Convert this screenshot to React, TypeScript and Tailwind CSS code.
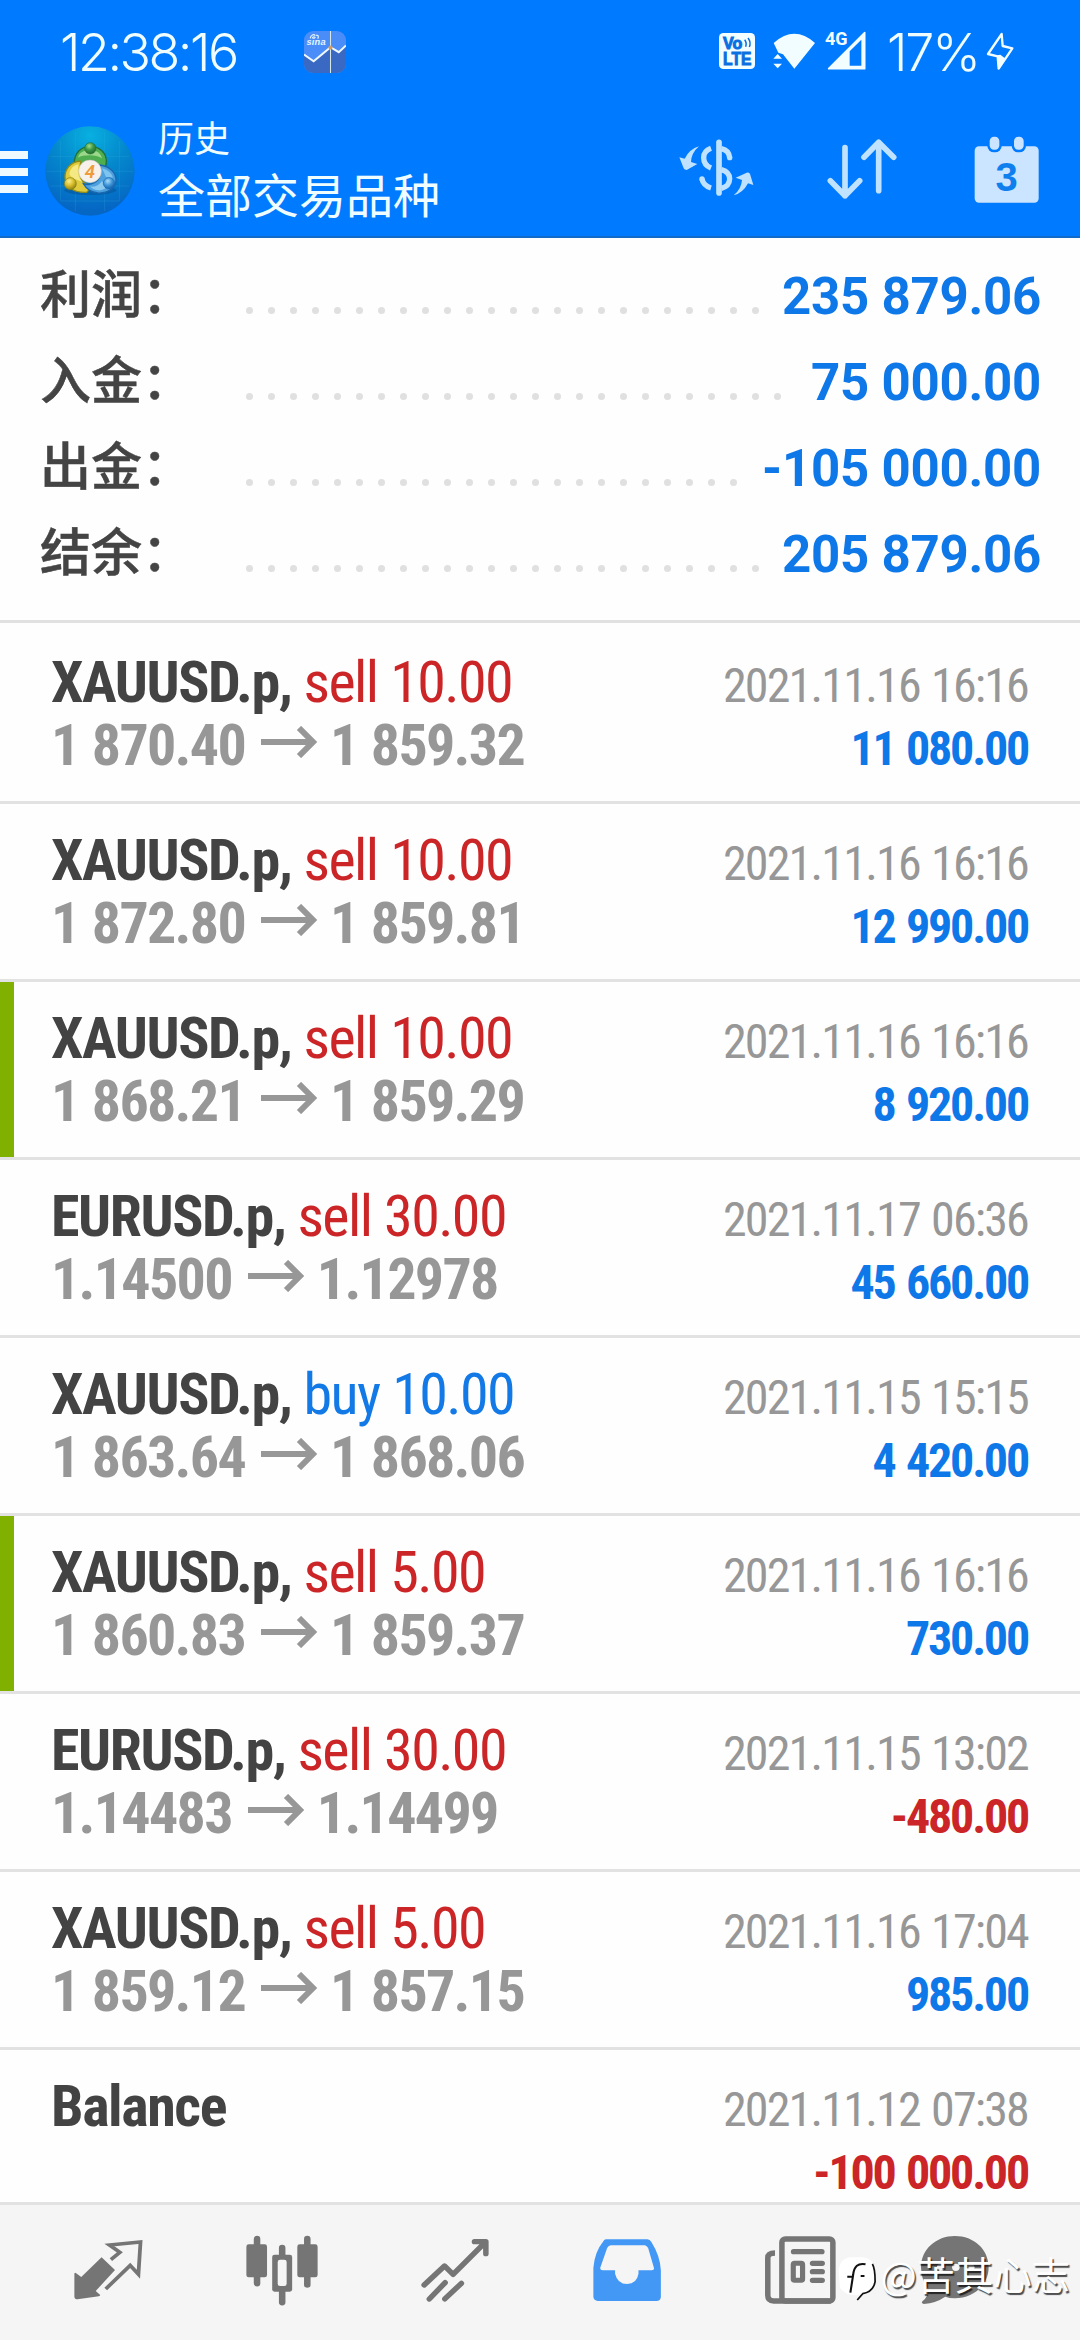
import type { ReactNode } from 'react';

type Deal = {
  symbol: string;
  side?: 'sell' | 'buy';
  volume?: string;
  from?: string;
  to?: string;
  time: string;
  profit: string;
  marked?: boolean;
};

const summary = [
  { label: '利润', value: '235 879.06', dots: 24 },
  { label: '入金', value: '75 000.00', dots: 25 },
  { label: '出金', value: '-105 000.00', dots: 23 },
  { label: '结余', value: '205 879.06', dots: 24 },
];

const deals: Deal[] = [
  { symbol: 'XAUUSD.p', side: 'sell', volume: '10.00', from: '1 870.40', to: '1 859.32', time: '2021.11.16 16:16', profit: '11 080.00' },
  { symbol: 'XAUUSD.p', side: 'sell', volume: '10.00', from: '1 872.80', to: '1 859.81', time: '2021.11.16 16:16', profit: '12 990.00' },
  { symbol: 'XAUUSD.p', side: 'sell', volume: '10.00', from: '1 868.21', to: '1 859.29', time: '2021.11.16 16:16', profit: '8 920.00', marked: true },
  { symbol: 'EURUSD.p', side: 'sell', volume: '30.00', from: '1.14500', to: '1.12978', time: '2021.11.17 06:36', profit: '45 660.00' },
  { symbol: 'XAUUSD.p', side: 'buy', volume: '10.00', from: '1 863.64', to: '1 868.06', time: '2021.11.15 15:15', profit: '4 420.00' },
  { symbol: 'XAUUSD.p', side: 'sell', volume: '5.00', from: '1 860.83', to: '1 859.37', time: '2021.11.16 16:16', profit: '730.00', marked: true },
  { symbol: 'EURUSD.p', side: 'sell', volume: '30.00', from: '1.14483', to: '1.14499', time: '2021.11.15 13:02', profit: '-480.00' },
  { symbol: 'XAUUSD.p', side: 'sell', volume: '5.00', from: '1 859.12', to: '1 857.15', time: '2021.11.16 17:04', profit: '985.00' },
  { symbol: 'Balance', time: '2021.11.12 07:38', profit: '-100 000.00' },
];

function Icon({ box, className, children }: { box: string; className: string; children: ReactNode }) {
  return (
    <svg viewBox={box} preserveAspectRatio="none" className={`block shrink-0 ${className}`} fill="none">
      {children}
    </svg>
  );
}

function StatusBar() {
  return (
    <div className="flex h-[106px] items-start pt-[31px] pl-[60px] text-[#f0fdff]">
      <span className="mt-[1px] w-[244px] font-['Inter',sans-serif] text-[52px] leading-[42px] font-[330] tracking-[-2.5px]">12:38:16</span>
      <Icon box="883 93 122 125" className="h-[42px] w-[42px] rounded-[9px]">
        <rect x="883" y="93" width="122" height="125" fill="#4a8cf8" />
        <path d="M883 163L911 183L960 141L984 156L1005 136V218H883Z" fill="#3a69c4" />
        <path d="M883 163L911 183L960 141L984 156L1005 136" stroke="#eef8ff" strokeWidth="6" />
        <path d="M960 93V218" stroke="#d6e6e0" strokeWidth="3" />
        <circle cx="960" cy="142" r="6" fill="#d59a60" />
        <path d="M901 115C903 105 911 101 916 107M907 115C909 109 914 109 916 114M918 106C925 104 926 110 923 116" stroke="#e3f6ff" strokeWidth="3.5" />
        <text x="890" y="135" fontSize="27" fontStyle="italic" fontWeight="700" fontFamily="Liberation Sans, sans-serif" fill="#e3f6ff" textLength="56">sina</text>
      </Icon>
      <div className="ml-auto flex items-start pr-[66px]">
        <Icon box="234 99 108 108" className="mt-[2px] mr-[18px] h-[36px] w-[36px]">
          <rect x="234" y="99" width="108" height="108" rx="13" fill="#f2fdff" />
          <text x="246" y="148" fontSize="50" fontWeight="700" fontFamily="Liberation Sans, sans-serif" fill="#0a6fe0" stroke="#0a6fe0" strokeWidth="3" textLength="58" lengthAdjust="spacingAndGlyphs">Vo</text>
          <text x="246" y="194" fontSize="54" fontWeight="700" fontFamily="Liberation Sans, sans-serif" fill="#0a6fe0" stroke="#0a6fe0" strokeWidth="3" textLength="85" lengthAdjust="spacingAndGlyphs">LTE</text>
          <path d="M311 119Q318 128 314 140M321 114Q331 127 325 141" stroke="#0a6fe0" strokeWidth="4.5" />
        </Icon>
        <Icon box="395 99 128 108" className="mt-[2px] mr-[10px] h-[36px] w-[42.7px]">
          <path d="M397 129Q459 74 521 129L459 206L425 163L411 158Z" fill="#f2fdff" />
          <path d="M392 180L409 157L427 180ZM392 187L409 209L427 187Z" fill="#007aff" />
          <path d="M396 176L409 162L422 176ZM396 191L409 205L422 191Z" fill="#f2fdff" />
        </Icon>
        <Icon box="553 94 122 117" className="mr-[21px] h-[39px] w-[40.7px] overflow-visible">
          <path d="M564 207L672 99V207Z" fill="#f2fdff" stroke="#f2fdff" strokeWidth="5" strokeLinejoin="round" />
          <path d="M627 155L662 120V198H627Z" fill="#007aff" />
          <text x="553" y="137" fontSize="53" fontWeight="700" fontFamily="Roboto, sans-serif" fill="#f2fdff" textLength="68" lengthAdjust="spacingAndGlyphs">4G</text>
        </Icon>
        <span className="mt-[1px] mr-[10px] w-[89px] font-['Inter',sans-serif] text-[52px] leading-[42px] font-[330] tracking-[-2.2px] whitespace-nowrap">17%</span>
        <Icon box="1036 92 84 120" className="h-[40px] w-[28px]">
          <path d="M1083 101L1042 161L1071 168L1074 205L1115 144L1086 137Z" stroke="#f2fdff" strokeWidth="7" strokeLinejoin="round" />
          <path d="M1070 165L1075 205L1095 175L1079 163Z" fill="#f2fdff" />
        </Icon>
      </div>
    </div>
  );
}

function AppLogo() {
  return (
    <svg viewBox="45 45 270 270" className="block h-[90px] w-[90px] shrink-0" fill="none">
      <defs>
        <radialGradient id="disc" cx="0.5" cy="0.1" r="0.85">
          <stop offset="0" stopColor="#08b0e0" />
          <stop offset="0.5" stopColor="#0487cc" />
          <stop offset="1" stopColor="#0566c4" />
        </radialGradient>
        <radialGradient id="green" cx="0.4" cy="0.3" r="0.7">
          <stop offset="0" stopColor="#a5dc8c" />
          <stop offset="0.5" stopColor="#3f9a45" />
          <stop offset="1" stopColor="#206c30" />
        </radialGradient>
        <radialGradient id="gold" cx="0.4" cy="0.3" r="0.7">
          <stop offset="0" stopColor="#faf08a" />
          <stop offset="0.55" stopColor="#d6ba2a" />
          <stop offset="1" stopColor="#8e8414" />
        </radialGradient>
        <radialGradient id="azure" cx="0.4" cy="0.3" r="0.7">
          <stop offset="0" stopColor="#a8dcfa" />
          <stop offset="0.55" stopColor="#3c93d6" />
          <stop offset="1" stopColor="#1763ad" />
        </radialGradient>
      </defs>
      <circle cx="180" cy="180" r="134" fill="url(#disc)" />
      <path d="M136 62V300M224 62V300M92 90V270M268 90V270M50 181H310M62 225H298M62 137H298M92 270H268" stroke="#3dbbe6" strokeWidth="1.5" opacity="0.4" />
      <ellipse cx="181" cy="238" rx="78" ry="14" fill="#044f96" opacity="0.5" />
      <path d="M133 158C132 124 156 106 181 106C208 106 230 126 229 152C228 168 222 182 212 190L204 160C194 144 168 144 156 160Z" fill="#4fae50" stroke="#20703a" strokeWidth="4" />
      <path d="M144 140C150 120 168 116 181 120C200 116 212 126 216 142C200 130 160 130 144 140Z" fill="#9bd88a" />
      <path d="M152 150C120 152 104 176 105 200C106 228 132 246 170 244L186 226C164 222 146 204 150 176Z" fill="#e0cb3c" stroke="#8d8a1c" strokeWidth="4" />
      <path d="M118 190C120 172 132 162 146 160C140 182 146 200 156 212C140 206 126 204 118 190Z" fill="#f4e983" />
      <path d="M210 162C240 166 258 184 258 208C258 230 232 248 204 246C184 244 168 232 160 218C184 226 210 212 212 184Z" fill="#4ca0de" stroke="#1a67b0" strokeWidth="4" />
      <path d="M180 226C194 230 206 224 216 210L228 230C212 242 192 240 180 226Z" fill="#8ccaf0" />
      <path d="M216 172C236 178 246 188 248 200L228 198Z" fill="#7fc4ee" />
      <circle cx="181" cy="112" r="17" fill="url(#green)" stroke="#236f35" strokeWidth="2" />
      <circle cx="121" cy="218" r="18" fill="url(#gold)" stroke="#857f18" strokeWidth="2" />
      <circle cx="237" cy="217" r="17" fill="url(#azure)" stroke="#1a67b0" strokeWidth="2" />
      <circle cx="180" cy="181" r="34" fill="#f6f1ea" stroke="#d3cdc4" strokeWidth="2" />
      <text x="180" y="201" textAnchor="middle" fontSize="56" fontStyle="italic" fontWeight="600" fontFamily="Roboto, sans-serif" fill="#f09a38">4</text>
    </svg>
  );
}

function Toolbar() {
  return (
    <div className="flex h-[130px] items-center pr-[40px]">
      <div className="mt-[1px] mr-[17px] flex w-[28px] flex-col gap-[9px]">
        <div className="h-[8px] bg-[#eefaff]" />
        <div className="h-[8px] bg-[#eefaff]" />
        <div className="h-[8px] bg-[#eefaff]" />
      </div>
      <AppLogo />
      <div className="mb-[7px] ml-[23px] flex flex-col font-['Noto_Sans_CJK_SC',sans-serif] text-[#f0fdff]">
        <span className="text-[36px] leading-[50px]">历史</span>
        <span className="text-[47px] leading-[63px]">全部交易品种</span>
      </div>
      <div className="ml-auto flex items-center">
        <Icon box="110 415 230 180" className="mt-[-6px] mr-[71px] h-[60px] w-[76.7px]">
          <g stroke="#bfe2ff" strokeWidth="16">
            <path d="M233 428V580" strokeLinecap="round" strokeWidth="17" />
            <path d="M240 447Q263 452 265 474" />
            <circle cx="265" cy="474" r="8" fill="#bfe2ff" stroke="none" />
            <path d="M240 510Q265 517 265 538Q264 560 240 566" />
            <path d="M209 446Q187 454 187 474Q187 496 209 505" />
            <path d="M182 538Q186 558 209 565" />
            <circle cx="182" cy="538" r="8" fill="#bfe2ff" stroke="none" />
          </g>
          <path d="M173 440Q150 460 149 487L168 493L136 511Q129 511 127 506L114 473L130 477Q145 448 173 440Z" fill="#bfe2ff" />
          <path d="M277 587Q300 568 302 541L283 534L316 519Q323 518 326 523L336 556L320 551Q305 580 277 587Z" fill="#bfe2ff" />
        </Icon>
        <Icon box="555 415 215 185" className="mt-[-5px] mr-[76px] h-[61.7px] w-[71.7px]">
          <path d="M612 444V588M568 543L612 588L656 543M713 573V428M669 473L713 428L758 473" stroke="#bfe2ff" strokeWidth="17" strokeLinecap="round" strokeLinejoin="round" />
        </Icon>
        <Icon box="1000 403 200 207" className="mt-[-3px] h-[69px] w-[66.7px]">
          <rect x="1005" y="437" width="192" height="169" rx="13" fill="#cbe4ff" />
          <rect x="1043" y="400" width="43" height="55" rx="20" fill="#007aff" />
          <rect x="1116" y="400" width="43" height="55" rx="20" fill="#007aff" />
          <rect x="1050" y="408" width="29" height="39" rx="13" fill="#cbe4ff" />
          <rect x="1123" y="408" width="29" height="39" rx="13" fill="#cbe4ff" />
          <text x="1101" y="570" textAnchor="middle" fontSize="120" fontWeight="700" fontFamily="Liberation Sans, sans-serif" fill="#0f7fee">3</text>
        </Icon>
      </div>
    </div>
  );
}

function Summary() {
  return (
    <section className="h-[385px] shrink-0 border-b-[3px] border-[#e1e1e1] pt-[11px]">
      {summary.map((row) => (
        <div key={row.label} className="flex h-[86px] items-baseline pr-[39px] pl-[40px] leading-[86px]">
          <span className="w-[206px] translate-y-[-1px] font-['Noto_Sans_CJK_SC',sans-serif] text-[51px] leading-[86px] font-medium text-[#444444] [-webkit-text-stroke:0.5px_#444444]">{row.label}：</span>
          <span className="flex gap-[15px]">
            {Array.from({ length: row.dots }, (_, i) => (
              <span key={i} className="h-[7px] w-[7px] rounded-full bg-[#e0e0e0]" />
            ))}
          </span>
          <span className="ml-auto font-['Roboto',sans-serif] text-[51px] font-bold tracking-[-0.25px] text-[#0f78e8]">{row.value}</span>
        </div>
      ))}
    </section>
  );
}

function DealRow({ deal }: { deal: Deal }) {
  return (
    <div className="flex h-[178px] shrink-0 border-b-[3px] border-[#e2e2e2]">
      <div className={`w-[14px] shrink-0 ${deal.marked ? 'bg-[#80b000]' : ''}`} />
      <div className="flex-1 pt-[20px] pr-[52px] pl-[37px] font-['Roboto_Condensed','Roboto',sans-serif]">
        <div className="flex h-[72px] items-baseline text-[58px] leading-[72px] whitespace-pre">
          <span className="font-bold tracking-[-1.4px] text-[#434343]">{deal.side ? `${deal.symbol}, ` : deal.symbol}</span>
          {deal.side && (
            <span className={`tracking-[-1.6px] [word-spacing:1px] ${deal.side === 'sell' ? 'text-[#cb2527]' : 'text-[#1279e6]'}`}>
              {deal.side} {deal.volume}
            </span>
          )}
          <span className="ml-auto text-[48px] tracking-[-1.8px] text-[#979797] [word-spacing:2px]">{deal.time}</span>
        </div>
        <div className="flex h-[54px] items-start text-[58px] leading-[54px] font-bold tracking-[-1.7px] text-[#979797] [word-spacing:1.5px]">
          {deal.from && (
            <>
              <span>{deal.from}</span>
              <svg viewBox="0 0 57 32" className="mt-[8px] mr-[12px] ml-[16px] h-[32px] w-[57px]" fill="none">
                <path d="M0 16H52M38 2L52 16L38 30" stroke="#979797" strokeWidth="6" />
              </svg>
              <span>{deal.to}</span>
            </>
          )}
          <span className={`ml-auto text-[48px] leading-[61px] tracking-[-2.2px] [word-spacing:2.5px] ${deal.profit.startsWith('-') ? 'text-[#cb2527]' : 'text-[#0f78e8]'}`}>{deal.profit}</span>
        </div>
      </div>
    </div>
  );
}

function BottomNav() {
  const g = '#757575';
  return (
    <nav className="relative flex h-[138px] shrink-0 items-center border-t-[3px] border-[#e2e2e2] bg-[#f5f5f5] pb-[5px] pl-[22px]">
      <div className="flex w-[173px] justify-center">
        <Icon box="213 181 205 186" className="h-[62px] w-[70.6px]">
          <path d="M296 236L335 274L279 337L292 349Q292 352 288 353L226 362Q218 362 217 354V285Q218 281 221 283L237 295Z" fill={g} />
          <path d="M323 243L349 221L319 199L409 190L403 287L379 260L308 331" stroke={g} strokeWidth="11" />
        </Icon>
      </div>
      <div className="flex w-[173px] justify-center">
        <Icon box="708 163 215 217" className="h-[72.3px] w-[74px]">
          <path d="M743 178V311M889 178V315M816 205V235M816 325V368" stroke={g} strokeWidth="19" strokeLinecap="round" />
          <rect x="712" y="194" width="60" height="99" rx="7" fill={g} />
          <rect x="860" y="194" width="59" height="99" rx="7" fill={g} />
          <rect x="787" y="225" width="58" height="111" rx="7" fill={g} />
          <rect x="803" y="240" width="26" height="79" rx="7" fill="#f5f5f5" />
        </Icon>
      </div>
      <div className="flex w-[173px] justify-center">
        <Icon box="1217 173 203 193" className="h-[64.3px] w-[70px]">
          <path d="M1229 314L1288 257L1313 282L1406 186M1375 184H1408V220" stroke={g} strokeWidth="16" strokeLinecap="round" strokeLinejoin="round" />
          <path d="M1244 356L1290 307M1289 356L1337 309" stroke={g} strokeWidth="16" strokeLinecap="round" />
        </Icon>
      </div>
      <div className="flex w-[173px] justify-center">
        <Icon box="152 173 205 193" className="h-[64.3px] w-[70.6px]">
          <path
            fillRule="evenodd"
            d="M192 177H313Q320 178 324 184Q350 226 352 270V350Q351 362 339 362H169Q157 361 156 350V262Q160 214 184 184Q187 178 192 177ZM206 195Q199 197 196 203L176 262Q175 269 183 270H219V280Q226 311 254 311Q282 310 287 280V270H326Q333 269 332 263L315 203Q311 197 306 195Z"
            fill="#4398f5"
          />
        </Icon>
      </div>
      <div className="flex w-[173px] justify-center">
        <Icon box="652 165 212 210" className="h-[70px] w-[73px]">
          <rect x="704" y="177" width="148" height="186" rx="10" stroke={g} strokeWidth="16" />
          <path d="M684 219Q663 219 663 234V346Q663 363 680 363H846" stroke={g} strokeWidth="16" />
          <path d="M738 215H820M793 250H821M793 275H821M793 301H821" stroke={g} strokeWidth="16" strokeLinecap="round" />
          <rect x="737" y="250" width="27" height="51" rx="4" stroke={g} strokeWidth="15" />
        </Icon>
      </div>
      <div className="flex w-[135px] justify-center">
        <Icon box="1103 165 203 210" className="h-[70px] w-[70px]">
          <path d="M1204 168C1260 168 1302 208 1302 262C1302 316 1256 355 1204 355Q1188 355 1176 350Q1150 369 1114 372Q1105 370 1110 364Q1127 351 1127 328Q1106 298 1106 262C1106 208 1150 168 1204 168Z" fill={g} />
          <circle cx="1163" cy="262" r="11" fill="#f5f5f5" />
          <circle cx="1207" cy="262" r="11" fill="#f5f5f5" />
          <circle cx="1250" cy="262" r="11" fill="#f5f5f5" />
        </Icon>
      </div>
      <div className="absolute top-[43px] right-[10px] flex items-center">
        <Icon box="866 238 112 134" className="mt-[8px] mr-[4px] h-[44.7px] w-[38.5px]">
          <path d="M900 242H934Q971 244 972 280V312Q969 345 936 350L922 356Q886 356 872 334L868 285Q870 246 900 242Z" fill="#fff" />
          <path d="M946 263Q914 256 910 295L902 348M893 300H912M932 298H943" stroke="#111" strokeWidth="6" />
          <path d="M966 262Q974 275 974 315Q969 345 938 351L922 370" stroke="#111" strokeWidth="5" />
        </Icon>
        <span className="font-['Noto_Sans_CJK_SC',sans-serif] text-[38.3px] leading-[46px] text-white [text-shadow:1.5px_1.5px_1px_rgba(0,0,0,0.7)]">@苦其心志</span>
      </div>
    </nav>
  );
}

export default function App() {
  return (
    <div className="flex h-[2340px] w-[1080px] flex-col overflow-hidden bg-[#fefefe]">
      <header className="h-[238px] shrink-0 border-b-[2px] border-[#126bcb] bg-[#007aff]">
        <StatusBar />
        <Toolbar />
      </header>
      <Summary />
      <main className="flex min-h-0 flex-1 flex-col overflow-hidden pt-[3px]">
        {deals.map((deal, i) => (
          <DealRow key={i} deal={deal} />
        ))}
      </main>
      <BottomNav />
    </div>
  );
}
